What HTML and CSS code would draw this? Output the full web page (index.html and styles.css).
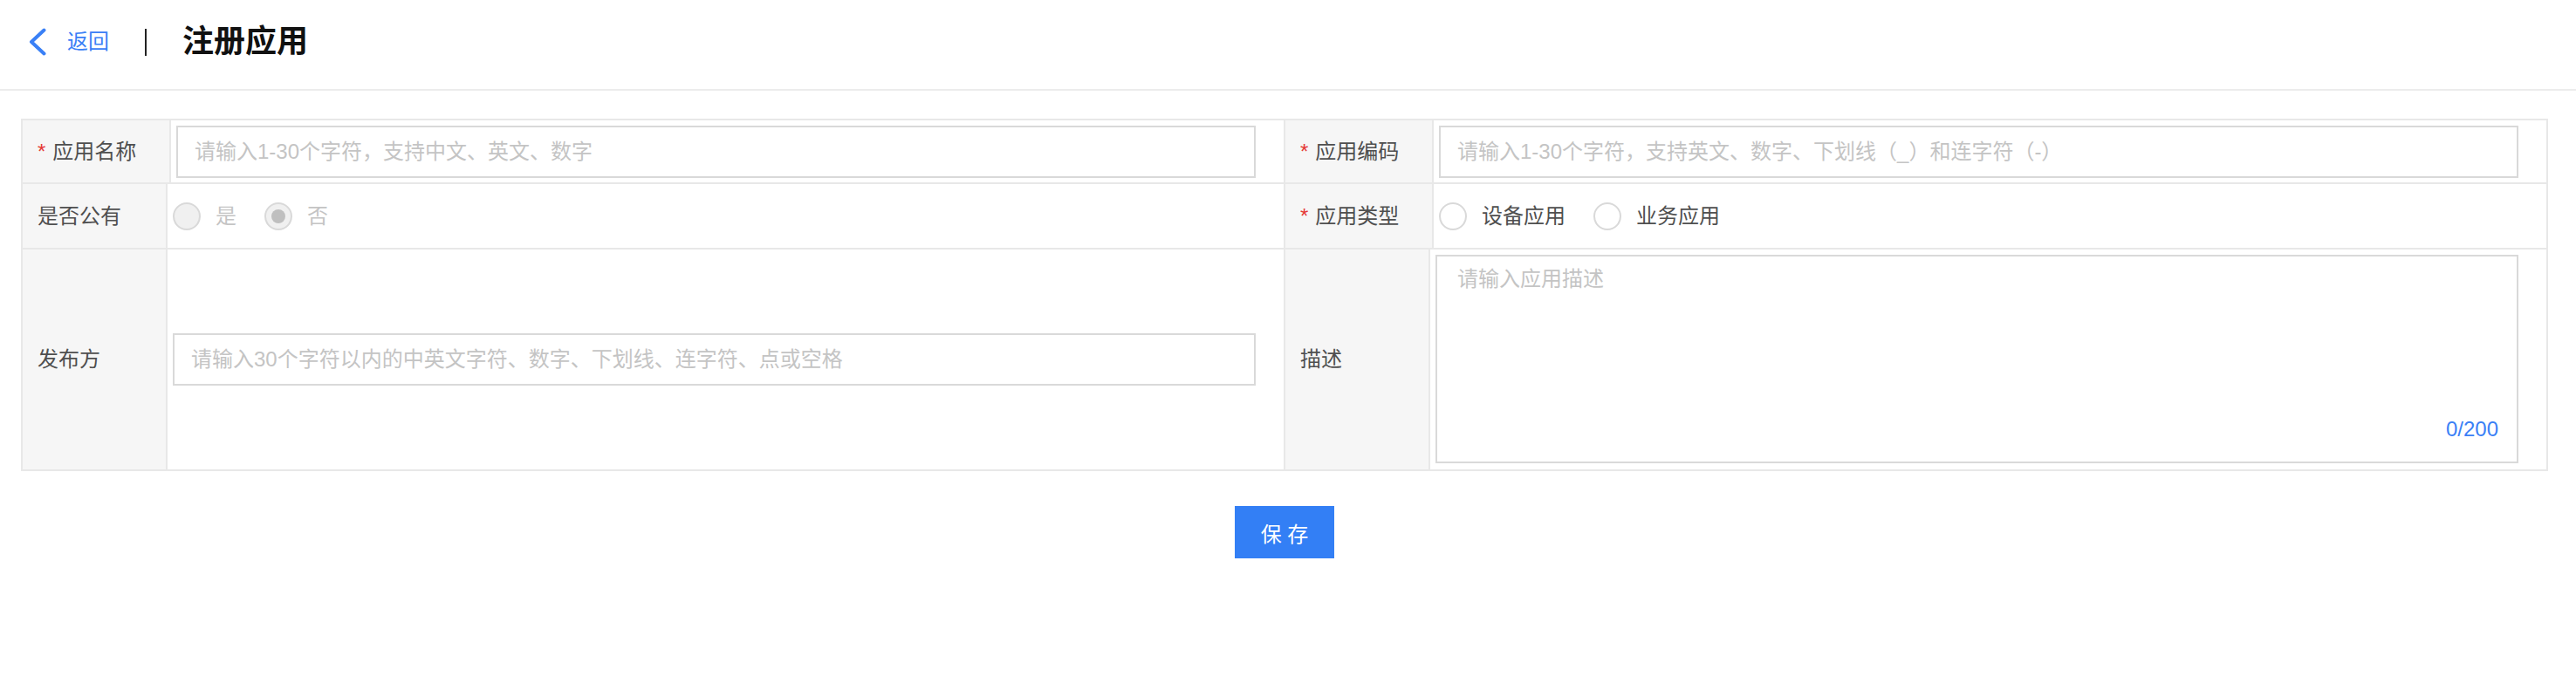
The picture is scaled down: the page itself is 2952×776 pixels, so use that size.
FILE: index.html
```html
<!DOCTYPE html>
<html lang="zh-CN">
<head>
<meta charset="utf-8">
<title>注册应用</title>
<link rel="stylesheet" href="styles.css">
</head>
<body>
<header class="topbar">
  <a class="back">
    <svg class="back-icon" viewBox="0 0 20 32" width="20" height="32"><polyline points="17.5,2.5 3,16 17.5,29.5" fill="none" stroke="#3a80f6" stroke-width="4" stroke-linecap="round" stroke-linejoin="round"/></svg>
    <span class="back-text">返回</span>
  </a>
  <span class="sep"></span>
  <h1 class="title">注册应用</h1>
</header>
<main class="content">
  <div class="form-table">
    <div class="row row-1">
      <div class="half">
        <div class="label label-wide"><span class="req">*</span>应用名称</div>
        <div class="value"><input class="text-input" type="text" placeholder="请输入1-30个字符，支持中文、英文、数字"></div>
      </div>
      <div class="half">
        <div class="label label-wide"><span class="req">*</span>应用编码</div>
        <div class="value"><input class="text-input" type="text" placeholder="请输入1-30个字符，支持英文、数字、下划线（_）和连字符（-）"></div>
      </div>
    </div>
    <div class="row row-2">
      <div class="half">
        <div class="label label-narrow">是否公有</div>
        <div class="value radios">
          <label class="radio disabled"><span class="dot"></span><span class="radio-text">是</span></label>
          <label class="radio disabled checked"><span class="dot"></span><span class="radio-text">否</span></label>
        </div>
      </div>
      <div class="half">
        <div class="label label-wide"><span class="req">*</span>应用类型</div>
        <div class="value radios">
          <label class="radio"><span class="dot"></span><span class="radio-text">设备应用</span></label>
          <label class="radio"><span class="dot"></span><span class="radio-text">业务应用</span></label>
        </div>
      </div>
    </div>
    <div class="row row-3">
      <div class="half">
        <div class="label label-narrow">发布方</div>
        <div class="value"><input class="text-input" type="text" placeholder="请输入30个字符以内的中英文字符、数字、下划线、连字符、点或空格"></div>
      </div>
      <div class="half">
        <div class="label label-narrow">描述</div>
        <div class="value value-area">
          <div class="area-wrap">
            <textarea class="text-area" placeholder="请输入应用描述"></textarea>
            <span class="counter">0/200</span>
          </div>
        </div>
      </div>
    </div>
  </div>
  <div class="actions">
    <button class="btn-primary" type="button">保 存</button>
  </div>
</main>
</body>
</html>
```
FILE: styles.css
```css
* { box-sizing: border-box; }
html, body { margin: 0; padding: 0; background: #fff; }
body {
  font-family: "Liberation Sans", "Noto Sans CJK SC", sans-serif;
  font-size: 24px;
  color: #555;
}

.topbar {
  height: 104px;
  border-bottom: 2px solid #ececec;
  display: flex;
  align-items: center;
  padding: 0 0 6px 33px;
}
.back {
  display: flex;
  align-items: center;
  color: #3a80f6;
  text-decoration: none;
}
.back-icon { display: block; }
.back-text {
  margin-left: 24px;
  font-size: 24px;
  line-height: 32px;
}
.sep {
  width: 2px;
  height: 31px;
  background: #222;
  margin-left: 41px;
}
.title {
  margin: 0 0 0 41px;
  font-size: 36px;
  line-height: 40px;
  font-weight: bold;
  color: #111;
}

.content {
  padding: 32px 32px 0 24px;
}
.form-table {
  border: 2px solid #e8e8e8;
}
.row {
  display: flex;
}
.row + .row { border-top: 2px solid #e8e8e8; }
.row-1 { height: 71px; }
.row-2 { height: 75px; }
.row-3 { height: 254px; }

.half {
  flex: 1 1 0;
  display: flex;
  min-width: 0;
}
.half + .half { border-left: 2px solid #e8e8e8; }

.label {
  flex: none;
  background: #f6f6f6;
  border-right: 2px solid #e8e8e8;
  display: flex;
  align-items: center;
  padding-left: 17px;
  color: #4f4f4f;
  line-height: 30px;
  white-space: nowrap;
}
.label-wide { width: 170px; }
.label-narrow { width: 166px; }
.req {
  color: #e53935;
  margin-right: 8px;
}

.value {
  flex: 1 1 0;
  min-width: 0;
  display: flex;
  align-items: center;
  padding: 0 32px 0 6px;
}
.text-input {
  flex: 1 1 0;
  min-width: 0;
  height: 60px;
  border: 2px solid #d9d9d9;
  border-radius: 0;
  padding: 0 19px;
  font: inherit;
  font-size: 24px;
  color: #555;
  outline: none;
  background: #fff;
}
.text-input::placeholder,
.text-area::placeholder { color: #c4c4c4; opacity: 1; }

.radios { gap: 0; }
.radio {
  display: flex;
  align-items: center;
  margin-right: 32px;
}
.dot {
  width: 32px;
  height: 32px;
  border-radius: 50%;
  border: 2px solid #d9d9d9;
  background: #fff;
  display: flex;
  align-items: center;
  justify-content: center;
}
.radio.disabled .dot { background: #f0f0f0; }
.radio.checked .dot::after {
  content: "";
  width: 16px;
  height: 16px;
  border-radius: 50%;
  background: #bfbfbf;
}
.radio-text {
  margin-left: 17px;
  color: #4f4f4f;
  line-height: 30px;
}
.radio.disabled .radio-text { color: #c4c4c4; }

.value-area {
  align-items: stretch;
  padding-top: 6px;
  padding-bottom: 7px;
}
.area-wrap {
  position: relative;
  flex: 1 1 0;
  min-width: 0;
  display: flex;
}
.text-area {
  flex: 1 1 0;
  min-width: 0;
  border: 2px solid #d9d9d9;
  border-radius: 0;
  padding: 12px 23px;
  font: inherit;
  font-size: 24px;
  line-height: 28px;
  resize: none;
  outline: none;
  color: #555;
}
.counter {
  position: absolute;
  right: 23px;
  bottom: 27px;
  color: #3a80f6;
  font-size: 24px;
  line-height: 24px;
}

.actions {
  display: flex;
  justify-content: center;
  margin-top: 40px;
}
.btn-primary {
  width: 114px;
  height: 60px;
  border: none;
  border-radius: 0;
  background: #337ff5;
  color: #fff;
  font: inherit;
  font-size: 24px;
  padding: 0;
}
```
